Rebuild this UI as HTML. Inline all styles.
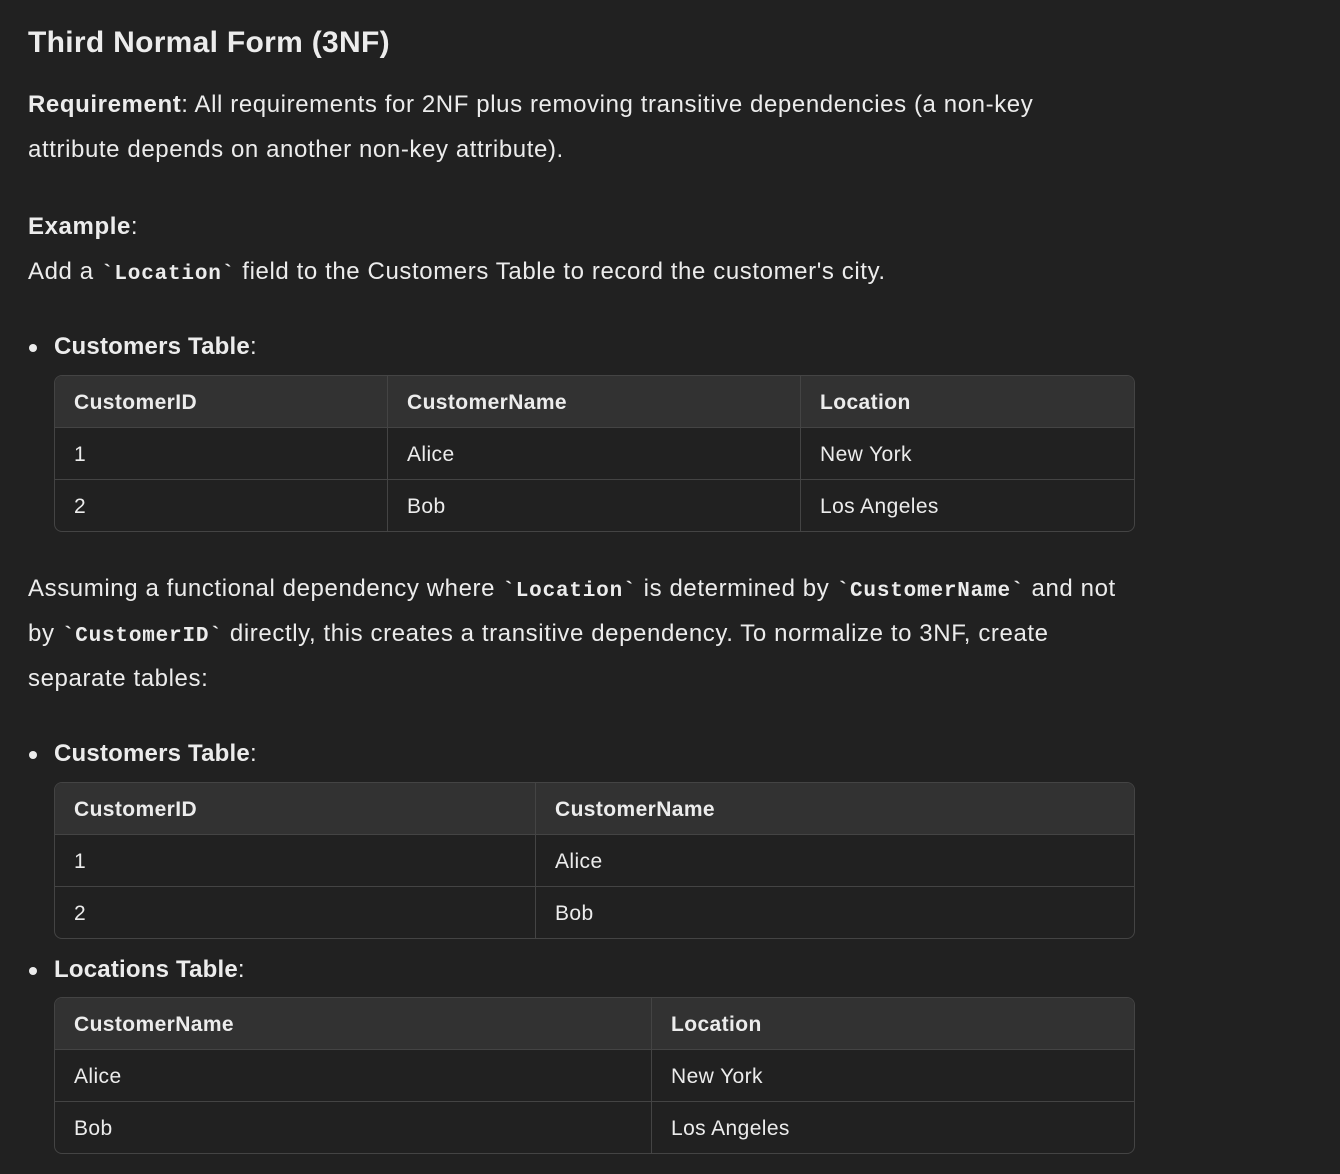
<!DOCTYPE html>
<html><head><style>
body{margin:0;background:#212121;color:#ececec;font-family:"Liberation Sans",sans-serif;width:1340px;height:1174px;overflow:hidden;position:relative}
.t{position:absolute;left:28px;font-size:24px;letter-spacing:0.6px;line-height:45px;white-space:nowrap}
h1{position:absolute;left:28px;top:22px;margin:0;font-size:30px;letter-spacing:0.3px;font-weight:bold;line-height:42px}
b{font-weight:bold}
code{font-family:"Liberation Mono",monospace;font-weight:bold;font-size:21px;letter-spacing:0.8px}
.li{position:absolute;left:54px;font-size:24px;letter-spacing:0.2px;font-weight:bold;line-height:30px}
.li:before{content:"";position:absolute;left:-25px;top:12px;width:8px;height:8px;border-radius:50%;background:#ececec}
table{position:absolute;left:54px;width:1081px;border-collapse:separate;border-spacing:0;border:1px solid #444;border-radius:8px;overflow:hidden;font-size:21px;letter-spacing:0.4px}
td,th{height:52px;padding:2px 0 0 19px;text-align:left;border-bottom:1px solid #444;border-right:1px solid #444;box-sizing:border-box}
th{background:#323232;font-weight:bold}
tr:last-child td{border-bottom:none;height:51px}
td:last-child,th:last-child{border-right:none}
</style></head><body>
<h1>Third Normal Form (3NF)</h1>
<div class="t" style="top:82px"><b>Requirement</b>: All requirements for 2NF plus removing transitive dependencies (a non-key</div>
<div class="t" style="top:127px">attribute depends on another non-key attribute).</div>
<div class="t" style="top:204px"><b>Example</b>:</div>
<div class="t" style="top:249px">Add a <code>`Location`</code> field to the Customers Table to record the customer's city.</div>
<div class="li" style="top:332px">Customers Table<span style="font-weight:normal">:</span></div>
<table style="top:375px"><tr><th style="width:333px">CustomerID</th><th style="width:413px">CustomerName</th><th>Location</th></tr>
<tr><td>1</td><td>Alice</td><td>New York</td></tr><tr><td>2</td><td>Bob</td><td>Los Angeles</td></tr></table>
<div class="t" style="top:566px">Assuming a functional dependency where <code>`Location`</code> is determined by <code>`CustomerName`</code> and not</div>
<div class="t" style="top:611px">by <code>`CustomerID`</code> directly, this creates a transitive dependency. To normalize to 3NF, create</div>
<div class="t" style="top:656px">separate tables:</div>
<div class="li" style="top:739px">Customers Table<span style="font-weight:normal">:</span></div>
<table style="top:782px"><tr><th style="width:481px">CustomerID</th><th>CustomerName</th></tr>
<tr><td>1</td><td>Alice</td></tr><tr><td>2</td><td>Bob</td></tr></table>
<div class="li" style="top:955px">Locations Table<span style="font-weight:normal">:</span></div>
<table style="top:997px"><tr><th style="width:597px">CustomerName</th><th>Location</th></tr>
<tr><td>Alice</td><td>New York</td></tr><tr><td>Bob</td><td>Los Angeles</td></tr></table>
</body></html>
